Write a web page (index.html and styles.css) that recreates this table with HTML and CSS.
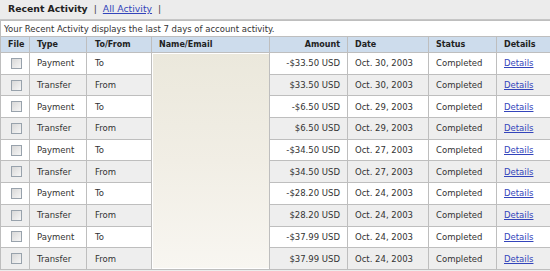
FILE: index.html
```html
<!DOCTYPE html>
<html>
<head>
<meta charset="utf-8">
<link rel="stylesheet" href="styles.css">
</head>
<body>
<div class="page">
  <div class="tabs">
    <span class="tab-current">Recent Activity</span>
    <span class="sep">|</span>
    <a class="tab-link" href="#">All Activity</a>
    <span class="sep">|</span>
  </div>
  <table class="activity">
    <colgroup>
      <col class="w-file"><col class="w-type"><col class="w-to"><col class="w-name">
      <col class="w-amt"><col class="w-date"><col class="w-status"><col class="w-det">
    </colgroup>
    <tr class="note-row"><td colspan="8" class="note">Your Recent Activity displays the last 7 days of account activity.</td></tr>
    <tr class="head">
      <th>File</th>
      <th>Type</th>
      <th class="to">To/From</th>
      <th>Name/Email</th>
      <th class="amt">Amount</th>
      <th>Date</th>
      <th>Status</th>
      <th>Details</th>
    </tr>
    <tr class="odd">
      <td class="file"><span class="box"></span></td><td>Payment</td><td class="to">To</td>
      <td class="redact" rowspan="10"><div class="blur"></div></td>
      <td class="amt">-$33.50 USD</td><td>Oct. 30, 2003</td><td>Completed</td><td><a href="#">Details</a></td>
    </tr>
    <tr class="even">
      <td class="file"><span class="box"></span></td><td>Transfer</td><td class="to">From</td>
      <td class="amt">$33.50 USD</td><td>Oct. 30, 2003</td><td>Completed</td><td><a href="#">Details</a></td>
    </tr>
    <tr class="odd">
      <td class="file"><span class="box"></span></td><td>Payment</td><td class="to">To</td>
      <td class="amt">-$6.50 USD</td><td>Oct. 29, 2003</td><td>Completed</td><td><a href="#">Details</a></td>
    </tr>
    <tr class="even">
      <td class="file"><span class="box"></span></td><td>Transfer</td><td class="to">From</td>
      <td class="amt">$6.50 USD</td><td>Oct. 29, 2003</td><td>Completed</td><td><a href="#">Details</a></td>
    </tr>
    <tr class="odd">
      <td class="file"><span class="box"></span></td><td>Payment</td><td class="to">To</td>
      <td class="amt">-$34.50 USD</td><td>Oct. 27, 2003</td><td>Completed</td><td><a href="#">Details</a></td>
    </tr>
    <tr class="even">
      <td class="file"><span class="box"></span></td><td>Transfer</td><td class="to">From</td>
      <td class="amt">$34.50 USD</td><td>Oct. 27, 2003</td><td>Completed</td><td><a href="#">Details</a></td>
    </tr>
    <tr class="odd">
      <td class="file"><span class="box"></span></td><td>Payment</td><td class="to">To</td>
      <td class="amt">-$28.20 USD</td><td>Oct. 24, 2003</td><td>Completed</td><td><a href="#">Details</a></td>
    </tr>
    <tr class="even">
      <td class="file"><span class="box"></span></td><td>Transfer</td><td class="to">From</td>
      <td class="amt">$28.20 USD</td><td>Oct. 24, 2003</td><td>Completed</td><td><a href="#">Details</a></td>
    </tr>
    <tr class="odd">
      <td class="file"><span class="box"></span></td><td>Payment</td><td class="to">To</td>
      <td class="amt">-$37.99 USD</td><td>Oct. 24, 2003</td><td>Completed</td><td><a href="#">Details</a></td>
    </tr>
    <tr class="even">
      <td class="file"><span class="box"></span></td><td>Transfer</td><td class="to">From</td>
      <td class="amt">$37.99 USD</td><td>Oct. 24, 2003</td><td>Completed</td><td><a href="#">Details</a></td>
    </tr>
  </table>
</div>
</body>
</html>
```

FILE: styles.css
```css
html, body {
  margin: 0;
  padding: 0;
  background: #ececec;
}
.page {
  width: 550px;
  height: 271px;
  overflow: hidden;
  font-family: "DejaVu Sans", Verdana, sans-serif;
  font-size: 8.5px;
  color: #333;
  background: #ececec;
}
.tabs {
  box-sizing: border-box;
  height: 20px;
  padding: 0 0 2px 8px;
  display: flex;
  align-items: center;
  gap: 6px;
  font-size: 9.3px;
  border-bottom: 1px solid #c6c6c6;
}
.tab-current {
  font-weight: bold;
  color: #222;
}
.tab-link {
  color: #3344bb;
}
.sep {
  color: #444;
}
.activity {
  border-collapse: collapse;
  width: 550px;
  background: #fff;
  table-layout: fixed;
}
.w-file { width: 29px; }
.w-type { width: 57px; }
.w-to { width: 65px; }
.w-name { width: 118px; }
.w-amt { width: 78px; }
.w-date { width: 81px; }
.w-status { width: 68px; }
.w-det { width: 54px; }
.activity td, .activity th {
  border: 1px solid #bebebe;
  padding: 0 0 0 7px;
  white-space: nowrap;
  text-align: left;
  overflow: hidden;
  line-height: 12px;
}
.note-row { height: 16px; }
.note-row td {
  padding-left: 3px;
  color: #333;
  background: #fff;
}
.head { height: 16px; }
.head th {
  background: #cddcec;
  font-weight: bold;
  color: #222;
  font-size: 8px;
}
.odd, .even { height: 21.7px; }
.odd td { background: #fff; }
.even td { background: #eeeeee; }
.activity .to { padding-left: 8px; }
.activity .amt { text-align: right; padding: 0 7px 0 0; }
.activity td.file { padding-left: 10px; }
.box {
  display: block;
  box-sizing: border-box;
  width: 11px;
  height: 11px;
  border: 1px solid #98a2ac;
  background: linear-gradient(135deg, #d8d8d8, #f6f6f6);
}
.activity td.redact {
  padding: 0;
  vertical-align: top;
  background: #fff;
}
.blur {
  margin: 1px 0 0 1px;
  height: 214px;
  background: linear-gradient(180deg, #ebe8dc 0%, #f1eee5 50%, #f8f6f1 100%);
}
a {
  color: #3344bb;
  text-decoration: underline;
}
```
